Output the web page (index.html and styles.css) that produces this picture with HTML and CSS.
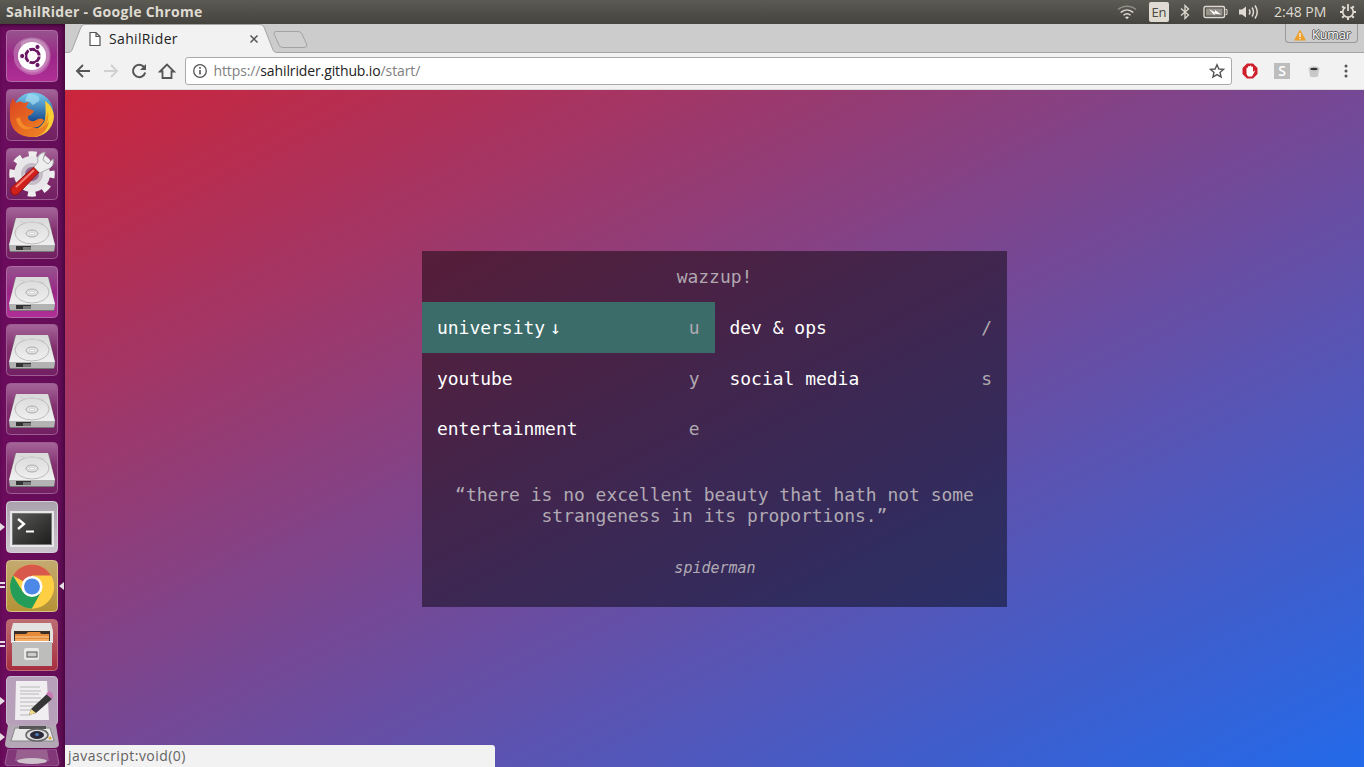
FILE: index.html
```html
<!DOCTYPE html>
<html lang="en">
<head>
<meta charset="utf-8">
<title>SahilRider</title>
<link rel="stylesheet" href="styles.css">
</head>
<body>
<svg class="defs" width="0" height="0">
  <defs>
    <linearGradient id="plum" x1="0" y1="0" x2="0" y2="1"><stop offset="0" stop-color="#a5669a"/><stop offset=".45" stop-color="#83306f"/><stop offset="1" stop-color="#721f63"/></linearGradient>
    <linearGradient id="magenta" x1="0" y1="0" x2="0" y2="1"><stop offset="0" stop-color="#96548d"/><stop offset=".5" stop-color="#9b2687"/><stop offset="1" stop-color="#b02f97"/></linearGradient>
    <linearGradient id="silver" x1="0" y1="0" x2="0" y2="1"><stop offset="0" stop-color="#aaa3ad"/><stop offset="1" stop-color="#cdc6cf"/></linearGradient>
    <linearGradient id="gold" x1="0" y1="0" x2="0" y2="1"><stop offset="0" stop-color="#c4aa70"/><stop offset="1" stop-color="#b59235"/></linearGradient>
    <linearGradient id="brick" x1="0" y1="0" x2="0" y2="1"><stop offset="0" stop-color="#bd6c72"/><stop offset="1" stop-color="#a72e3f"/></linearGradient>
    <linearGradient id="metal" x1="0" y1="0" x2="0" y2="1"><stop offset="0" stop-color="#d9d9d9"/><stop offset="1" stop-color="#f0f0f0"/></linearGradient>
    <linearGradient id="screen" x1="0" y1="0" x2="1" y2="1"><stop offset="0" stop-color="#5a5b58"/><stop offset="1" stop-color="#1c1d1c"/></linearGradient>
    <linearGradient id="fox" x1="0" y1="0" x2="1" y2="1"><stop offset="0" stop-color="#dc4420"/><stop offset="1" stop-color="#f08a24"/></linearGradient>
    <linearGradient id="globe" x1="0" y1="0" x2="0" y2="1"><stop offset="0" stop-color="#7accee"/><stop offset=".7" stop-color="#164b92"/></linearGradient>
    <g id="disk">
      <path d="M9 12H43L49 39L48 45H4L3 39Z" fill="#777"/>
      <path d="M10 11H42L49 38H3Z" fill="url(#metal)"/>
      <path d="M3 38H49L48 44H4Z" fill="#b3b3b3"/>
      <path d="M10 39H25V43H10Z" fill="#333"/><path d="M17 40H25V43H17Z" fill="#777"/>
      <ellipse cx="26" cy="26" rx="17" ry="11" fill="none" stroke="#bcbcbc"/>
      <ellipse cx="26" cy="26.500" rx="6" ry="3.500" fill="#e3e3e3" stroke="#aaa"/>
      <ellipse cx="26" cy="26.500" rx="2.500" ry="1.300" fill="#fff" stroke="#bbb" stroke-width=".6"/>
      <path d="M14 14C18 17 32 14 38 17" fill="none" stroke="#cfcfcf"/>
    </g>
  </defs>
</svg>

<header class="menubar">
  <span class="menubar-title">SahilRider - Google Chrome</span>
  <div class="indicators">
    <svg class="ind-wifi" width="20" height="16" viewBox="0 0 20 16" fill="none" stroke="#dfdbd2" stroke-width="1.500"><path d="M1 5.500C6 1 14 1 19 5.500" stroke="#918e86"/><path d="M3.700 8.500C7.500 5 12.500 5 16.300 8.500M6.500 11.300C8.600 9.400 11.400 9.400 13.500 11.300"/><path d="M8 13.200L10 15.300L12 13.200Q10 12 8 13.200Z" fill="#dfdbd2" stroke="none"/></svg>
    <span class="ind-lang">En</span>
    <svg class="ind-bt" width="10" height="16" viewBox="0 0 10 16" fill="none" stroke="#dfdbd2" stroke-width="1.300"><path d="M1 4.500L8.500 11L5 14.500V1.500L8.500 5L1 11.500"/></svg>
    <svg class="ind-bat" width="25" height="14" viewBox="0 0 25 14"><rect x="1" y="1.500" width="20.500" height="11" rx="1.500" fill="none" stroke="#dfdbd2" stroke-width="1.400"/><path d="M22.500 4.500H24V9.500H22.500" fill="none" stroke="#dfdbd2"/><rect x="3" y="3.500" width="16.500" height="7" fill="#96938b"/><path d="M6 4L12 7.500V5L18 9.500L11.500 8.500V10.500Z" fill="#fff"/></svg>
    <svg class="ind-vol" width="22" height="16" viewBox="0 0 22 16"><path d="M1 5.500H4L8 2.500V13.500L4 10.500H1Z" fill="#dfdbd2"/><path d="M11 5.500Q13 8 11 10.500M14 3.500Q17 8 14 12.500M17 1.500Q21.500 8 17 14.500" fill="none" stroke="#dfdbd2" stroke-width="1.500"/></svg>
    <span class="ind-clock">2:48 PM</span>
    <svg class="ind-gear" width="18" height="18" viewBox="0 0 18 18" fill="none" stroke="#dfdbd2"><path d="M6.500 4.200A5.300 5.300 0 1 0 11.500 4.200" stroke-width="1.800"/><path d="M9 1V8" stroke-width="1.800"/><path d="M9 14.500V17M1 9H3.500M14.500 9H17M3.200 3.200L5 5M14.800 3.200L13 5M3.200 14.800L5 13M14.800 14.800L13 13" stroke-width="2.100"/></svg>
  </div>
</header>

<div class="desktop">
  <nav class="launcher">
    <div class="app"><svg class="tile" viewBox="0 0 52 52"><rect x=".5" y=".5" width="51" height="51" rx="4" fill="url(#magenta)" stroke="#b06aa6"/><path d="M8 27C4 10 27 2 39 12C51 24 43 46 25 45C14 43 7 34 8 27Z" fill="#fff" opacity=".25"/><path d="M15 12C29 3 46 14 43 29C36 48 19 43 15 38" fill="#fff" opacity=".22"/><circle cx="26" cy="26" r="14" fill="#fff"/><circle cx="26.500" cy="26" r="6.700" fill="none" stroke="#6a1660" stroke-width="3"/><g stroke="#fff" stroke-width="1.100"><path d="M27 26L36 26M26 26L22 18M26 26L22 34"/></g><g fill="#6a1660" stroke="#fff" stroke-width="1"><circle cx="16.200" cy="26" r="2.600"/><circle cx="31.500" cy="17" r="2.600"/><circle cx="31.500" cy="35" r="2.600"/></g></svg></div>
    <div class="app"><svg class="tile" viewBox="0 0 52 52"><rect x=".5" y=".5" width="51" height="51" rx="4" fill="url(#plum)" stroke="#9c5b91"/><circle cx="27" cy="24" r="20.500" fill="url(#globe)"/><path d="M22 5C30 5 35 7 33 12L27 16L24 13L19 12Z" fill="#a5def3" opacity=".7"/><path d="M39 12C44 15 48 21 48 28C47 40 38 48 27 48C39 43 41 28 39 12Z" fill="#f9cf35"/><path d="M42 22C44 34 38 43 27 48L22 42C33 42 40 34 42 22Z" fill="#f39b25"/><path d="M7 9L10 14Q14 11 18 14L23 13L20 18C22 21 27 20 28 22Q26 26 22 27C21 31 26 34 30 31Q35 28 38 31C35 38 30 39 27 38C34 42 41 37 43 31C42 42 35 48 26 48C11 48 3 38 4 25Q3 16 7 9Z" fill="url(#fox)"/><path d="M14 28C15 36 20 39 27 38C22 43 12 40 10 30Z" fill="#f58b28"/></svg></div>
    <div class="app"><svg class="tile" viewBox="0 0 52 52"><rect x=".5" y=".5" width="51" height="51" rx="4" fill="url(#plum)" stroke="#9c5b91"/><circle cx="26" cy="26" r="18" fill="#e8e6e8"/><circle cx="26" cy="26" r="20" fill="none" stroke="#eee" stroke-width="5.500" stroke-dasharray="8 7.710" stroke-dashoffset="4"/><circle cx="26" cy="26" r="11" fill="#c6bdc7"/><circle cx="26" cy="26" r="7" fill="#94648e"/><path d="M6 39L29 18L34 23L12 46Q7 49 5 44Q4 41 6 39Z" fill="#cf201c" stroke="#951212"/><path d="M10 39L28 22" stroke="#f68074" stroke-width="2"/><path d="M28 19L32 14Q30 6 39 4L37 12L42 16L47 11Q49 19 40 22L34 25Z" fill="#eee" stroke="#aaa"/></svg></div>
    <div class="app"><svg class="tile" viewBox="0 0 52 52"><rect x=".5" y=".5" width="51" height="51" rx="4" fill="url(#plum)" stroke="#9c5b91"/><use href="#disk"/></svg></div>
    <div class="app"><svg class="tile" viewBox="0 0 52 52"><rect x=".5" y=".5" width="51" height="51" rx="4" fill="url(#magenta)" stroke="#b06aa6"/><use href="#disk"/></svg></div>
    <div class="app"><svg class="tile" viewBox="0 0 52 52"><rect x=".5" y=".5" width="51" height="51" rx="4" fill="url(#plum)" stroke="#9c5b91"/><use href="#disk"/></svg></div>
    <div class="app"><svg class="tile" viewBox="0 0 52 52"><rect x=".5" y=".5" width="51" height="51" rx="4" fill="url(#plum)" stroke="#9c5b91"/><use href="#disk"/></svg></div>
    <div class="app"><svg class="tile" viewBox="0 0 52 52"><rect x=".5" y=".5" width="51" height="51" rx="4" fill="url(#plum)" stroke="#9c5b91"/><use href="#disk"/></svg></div>
    <div class="app running"><svg class="tile" viewBox="0 0 52 52"><rect x=".5" y=".5" width="51" height="51" rx="4" fill="url(#silver)" stroke="#d4ced6"/><rect x="4" y="10" width="44" height="36" fill="#e8e8e8"/><rect x="6.500" y="12.500" width="39" height="31" fill="url(#screen)" stroke="#777"/><path d="M12 18L18 23L12 28" fill="none" stroke="#fff" stroke-width="2.300"/><path d="M20 30.500H28" stroke="#fff" stroke-width="2"/></svg></div>
    <div class="app running many focused"><svg class="tile" viewBox="0 0 52 52"><rect x=".5" y=".5" width="51" height="51" rx="4" fill="url(#gold)" stroke="#d6c18a"/><circle cx="26" cy="26.500" r="22" fill="#ffcf43"/><path d="M26 26.500L7 15.500A22 22 0 0 1 45 15.500H26Z" fill="#d8584c"/><path d="M7 15.500A22 22 0 0 0 26 48.500L35 32L26 26L16.500 31.500Z" fill="#249d59"/><path d="M26 16.500H45.500A22 22 0 0 1 26 48.500L35.500 32Z" fill="#ffcf43"/><circle cx="26" cy="26.500" r="10.500" fill="#fff"/><circle cx="26" cy="26.500" r="8" fill="#4b88e8"/></svg></div>
    <div class="app running many"><svg class="tile" viewBox="0 0 52 52"><rect x=".5" y=".5" width="51" height="51" rx="4" fill="url(#brick)" stroke="#bd6d77"/><path d="M7 4H45L47 12V24H5V12Z" fill="#e4e2e0"/><path d="M8 12H44V24H8Z" fill="#3b2d28"/><path d="M9 15H20L22 13H34L35 15H43V24H9Z" fill="#e58b39"/><path d="M9 18H43M9 21H43" stroke="#ffd09a"/><path d="M6 23H46V47H6Z" fill="#bdbdbb"/><path d="M6 22.500H46" stroke="#fff"/><rect x="18" y="29" width="15" height="12" rx="2" fill="#e9e9e7"/><rect x="21" y="33" width="10" height="5" fill="#ccc" stroke="#555"/></svg></div>
    <div class="app app-editor running"><svg width="52" height="50" viewBox="0 0 52 50"><path d="M4 .5H48Q51 .5 51.500 4V45Q51 49.500 47 49.500H5Q1 49.500 .5 46V4Q1 .5 4 .5Z" fill="#b7a0b9" stroke="#cab9cc"/><path d="M10 5H41L43 44H9Z" fill="#f0eef0"/><path d="M14 11H34M14 15H35M14 18H33M14 22H35M14 26H33M14 30H29M14 34H26M14 39H24" stroke="#b9b9b9"/><path d="M23 39L25 33L41 18L46 23L30 37Z" fill="#363636"/><path d="M40 18L43 15Q48 17 47 22L46 23Z" fill="#c878b4"/><path d="M23 39L25 33L30 37Z" fill="#edda8a"/></svg></div>
    <div class="app app-camera running"><svg width="56" height="24" viewBox="0 0 56 24"><path d="M4 0H52L55 19Q55 23 50 23H6Q1 23 1 19Z" fill="#b5a8b6"/><path d="M11 3H46L50 16H7Z" fill="#e8e8e8" stroke="#888"/><path d="M15 1H42V4H15Z" fill="#555"/><ellipse cx="33" cy="10" rx="11" ry="6" fill="#ddd" stroke="#666" stroke-width="1.500"/><ellipse cx="33" cy="10" rx="7" ry="4" fill="#282a3a"/><ellipse cx="33" cy="9.500" rx="2" ry="1.500" fill="#5178b5"/><circle cx="46" cy="13" r="1.500" fill="#dfa52c"/></svg></div>
    <div class="app app-folded"><svg width="56" height="17" viewBox="0 0 56 17"><path d="M4 0H52L55 14Q55 17 51 17H5Q1 17 1 14Z" fill="#813778" stroke="#9c6096"/><path d="M13 1H43L45 12H11Z" fill="#97608f"/><ellipse cx="28" cy="12" rx="15" ry="3" fill="#cdc1cc"/></svg></div>
  </nav>

  <main class="browser">
    <div class="tabstrip">
      <svg class="tab-shape" width="1299" height="29" viewBox="0 0 1299 29"><path d="M0 28.500H3Q6 28.500 7 26L16 3Q17 .5 20 .5H195Q198 .5 199 3L208 26Q209 28.500 212 28.500H1299V29H0Z" fill="#f2f2f2"/><path d="M0 28.500H3Q6 28.500 7 26L16 3Q17 .5 20 .5H195Q198 .5 199 3L208 26Q209 28.500 212 28.500H1299" fill="none" stroke="#a5a5a5"/><path d="M211 7.500H233Q236 7.500 237 10L242 21Q242 23.500 239 23.500H218Q215 23.500 214 21L209 10Q209 7.500 211 7.500Z" fill="#cfcfcf" stroke="#a3a3a3"/></svg>
      <div class="tab">
        <svg width="12" height="16" viewBox="0 0 12 16"><path d="M1 1.500H7L11 5.500V14.500H1ZM7 1.500V5.500H11" fill="#fff" stroke="#555" stroke-width="1.200"/></svg>
        <span class="tab-title">SahilRider</span>
        <svg class="tab-close" width="10" height="10" viewBox="0 0 10 10"><path d="M1.500 1.500L8.500 8.500M8.500 1.500L1.500 8.500" stroke="#555" stroke-width="1.500"/></svg>
      </div>
      <div class="profile">
        <svg width="12" height="12" viewBox="0 0 12 12"><path d="M6 .5L12 11.500H0Z" fill="#eda02b"/><path d="M6 4V8M6 9V10.200" stroke="#fff" stroke-width="1.200"/></svg>
        <span class="profile-name">Kumar</span>
      </div>
    </div>
    <div class="toolbar">
      <svg class="tool-back" width="16" height="14" viewBox="0 0 16 14"><path d="M15 7H2M8 1L2 7L8 13" fill="none" stroke="#555" stroke-width="1.900"/></svg>
      <svg class="tool-fwd" width="16" height="14" viewBox="0 0 16 14"><path d="M1 7H14M8 1L14 7L8 13" fill="none" stroke="#d0d0d0" stroke-width="1.900"/></svg>
      <svg class="tool-reload" width="16" height="16" viewBox="0 0 16 16"><path d="M13 4A6.200 6.200 0 1 0 14.200 9.500" fill="none" stroke="#555" stroke-width="2"/><path d="M15 1V7H9Z" fill="#555"/></svg>
      <svg class="tool-home" width="18" height="16" viewBox="0 0 18 16"><path d="M2 8.500L9 1.500L16 8.500H13.500V15H4.500V8.500Z" fill="none" stroke="#555" stroke-width="1.800"/></svg>
      <div class="omnibox">
        <svg width="16" height="16" viewBox="0 0 16 16"><circle cx="8" cy="8" r="6.300" fill="none" stroke="#555" stroke-width="1.300"/><path d="M8 7V11.500M8 4V5.700" stroke="#555" stroke-width="1.600"/></svg>
        <span class="url">https://<b>sahilrider.github.io</b>/start/</span>
        <svg class="star" width="16" height="16" viewBox="0 0 16 16"><path d="M8 1.700L9.900 6L14.500 6.400L11 9.500L12.100 14L8 11.600L3.900 14L5 9.500L1.500 6.400L6.100 6Z" fill="none" stroke="#555" stroke-width="1.400"/></svg>
      </div>
      <svg class="ext-hand" width="16" height="16" viewBox="0 0 16 16"><path d="M5 .5H11L15.500 5V11L11 15.500H5L.5 11V5Z" fill="#cf1f2b"/><path d="M4.500 9V5Q5.500 4 6 5V3.500Q7 2.500 7.600 3.500V3Q8.600 2 9.300 3V4Q10.300 3 11 4.300V9L12.300 7.500Q13.500 7.500 12.500 9L10 13.500H6L4.500 11Z" fill="#fff"/></svg>
      <span class="ext-s">S</span>
      <svg class="ext-cup" width="12" height="14" viewBox="0 0 12 14"><path d="M1 5H11L10 12.500Q6 14 2 12.500Z" fill="#c9c9c9"/><ellipse cx="6" cy="5" rx="5.200" ry="2.200" fill="#d9d9d9" stroke="#bbb" stroke-width=".6"/><ellipse cx="6" cy="5" rx="3.700" ry="1.200" fill="#333"/></svg>
      <svg class="ext-menu" width="4" height="14" viewBox="0 0 4 14" fill="#555"><circle cx="2" cy="2" r="1.500"/><circle cx="2" cy="7" r="1.500"/><circle cx="2" cy="12" r="1.500"/></svg>
    </div>
    <section class="page">
      <div class="panel">
        <h1 class="greeting">wazzup!</h1>
        <ul class="links">
          <li class="link active"><span>university<i class="arrow">↓</i></span><kbd>u</kbd></li>
          <li class="link"><span>dev &amp; ops</span><kbd>/</kbd></li>
          <li class="link"><span>youtube</span><kbd>y</kbd></li>
          <li class="link"><span>social media</span><kbd>s</kbd></li>
          <li class="link"><span>entertainment</span><kbd>e</kbd></li>
        </ul>
        <blockquote class="quote">“there is no excellent beauty that hath not some strangeness in its proportions.”</blockquote>
        <p class="author">spiderman</p>
      </div>
      <div class="status">javascript:void(0)</div>
    </section>
  </main>
</div>
</body>
</html>
```
FILE: styles.css
```css
* { box-sizing: border-box; }
body {
  margin: 0;
  width: 1365px;
  height: 767px;
  padding-right: 1px;
  overflow: hidden;
  background: #fff;
  font-family: "Open Sans", "Noto Sans", sans-serif;
  display: flex;
  flex-direction: column;
}
svg { display: block; flex: none; }
.defs { position: absolute; }

.menubar {
  height: 24px;
  flex: none;
  padding: 0 7px 0 6px;
  display: flex;
  align-items: center;
  justify-content: space-between;
  background: linear-gradient(#5b5a53, #44433e);
  color: #dfdbd2;
  font-size: 14px;
  line-height: 24px;
  white-space: nowrap;
}
.menubar-title { font-size: 14px; font-weight: 700; letter-spacing: 0.27px; }
.indicators { display: flex; align-items: center; }
.ind-lang {
  width: 20px;
  height: 20px;
  margin-left: 12px;
  border-radius: 2px;
  background: #dfdbd2;
  color: #4a4943;
  font-size: 13px;
  line-height: 20px;
  text-align: center;
}
.ind-bt { margin-left: 11px; }
.ind-bat { margin-left: 13px; }
.ind-vol { margin-left: 10px; }
.ind-clock { width: 54px; margin-left: 14px; }
.ind-gear { margin-left: 11px; }

.desktop { flex: 1; min-height: 0; display: flex; }
.launcher {
  width: 65px;
  flex: none;
  padding: 6px 0 0 6px;
  display: flex;
  flex-direction: column;
  gap: 6.9px;
  background: linear-gradient(90deg, #6b0b5c, #650d58 90%, #500845);
  box-shadow: inset 0 3px 4px -2px #30052a;
  overflow: hidden;
}
.app { position: relative; flex: none; height: 52px; }
.tile { width: 52px; height: 52px; }
.app-editor { height: 50px; margin-top: -1.500px; }
.app-camera { height: 24px; margin: -7.900px 0 0 -2px; }
.app-folded { height: 17px; margin: -7px 0 0 -2px; }
.running::before {
  content: "";
  position: absolute;
  left: -6px;
  top: calc(50% - 4px);
  border: 4px solid transparent;
  border-left: 5px solid #e5dce4;
  border-right: 0;
}
.app-camera::before { left: -4px; }
.many::before {
  width: 5px;
  height: 2px;
  border: solid #e5dce4;
  border-width: 2px 0;
}
.focused::after {
  content: "";
  position: absolute;
  right: 1px;
  top: calc(50% - 4px);
  border: 4px solid transparent;
  border-right: 5px solid #e5dce4;
  border-left: 0;
}

.browser { flex: 1; min-width: 0; display: flex; flex-direction: column; }
.tabstrip {
  height: 29px;
  flex: none;
  display: grid;
  grid-template-columns: 1fr auto;
  background: #ccc;
}
.tab-shape { grid-area: 1 / 1 / 2 / 3; }
.tab {
  grid-area: 1 / 1;
  width: 194px;
  height: 29px;
  padding-left: 24px;
  display: flex;
  align-items: center;
  color: #222;
  font-size: 14px;
  z-index: 1;
}
.tab-title { width: 72px; margin-left: 8px; letter-spacing: 0.35px; white-space: nowrap; }
.tab-close { margin-left: auto; }
.profile {
  grid-area: 1 / 2;
  width: 73px;
  height: 19px;
  margin-right: 6px;
  padding: 3px 0 0 8px;
  display: flex;
  align-items: center;
  gap: 6px;
  border: 1px solid #999;
  border-top: 0;
  border-radius: 0 0 4px 4px;
  z-index: 1;
}
.profile-name {
  color: #fff;
  font-size: 12.5px;
  line-height: 14px;
  text-shadow: 1px 0 #555, -1px 0 #555, 0 1px #555, 0 -1px #555;
}
.toolbar {
  height: 37px;
  flex: none;
  padding: 0 16px 0 10px;
  display: flex;
  align-items: center;
  background: #f2f2f2;
  border-bottom: 1px solid #ddd;
}
.tool-fwd { margin-left: 12px; }
.tool-reload { margin-left: 12px; }
.tool-home { margin-left: 11px; }
.omnibox {
  width: 1047px;
  height: 28px;
  margin-left: 9px;
  padding: 0 6px;
  display: flex;
  align-items: center;
  background: #fff;
  border: 1px solid #aaa;
  border-radius: 3px;
}
.url {
  margin-left: 5.500px;
  padding-bottom: 2px;
  color: #808080;
  font-size: 14px;
  letter-spacing: -0.12px;
}
.url b { color: #222; font-weight: 400; }
.star { margin-left: auto; }
.ext-hand { margin-left: 10px; }
.ext-s {
  width: 16px;
  height: 16px;
  margin-left: 16px;
  background: #bdbdbd;
  color: #fff;
  font-size: 14px;
  font-weight: 600;
  line-height: 16px;
  text-align: center;
}
.ext-cup { margin-left: 18px; }
.ext-menu { margin-left: auto; }

.page {
  position: relative;
  flex: 1;
  display: flex;
  align-items: center;
  justify-content: center;
  background: linear-gradient(to bottom right, #cb263c, #754895 50%, #236aea);
}
.panel {
  width: 585px;
  height: 356px;
  margin-top: 1px;
  background: rgba(0, 0, 0, 0.46);
  color: #fff;
  font: 17.97px/21px "DejaVu Sans Mono", monospace;
}
.greeting { margin: 0; padding: 15px; color: #b0a7af; font: inherit; text-align: center; }
.links {
  height: 152.700px;
  margin: 0;
  padding: 0;
  display: grid;
  grid-template-columns: 1fr 1fr;
  grid-auto-rows: 50.9px;
  list-style: none;
}
.link { padding: 14.700px 15px; display: flex; justify-content: space-between; }
.active { background: #3b6c6a; }
.link kbd { color: #b0a9b1; font: inherit; }
.arrow { margin-left: 5px; font-style: normal; font-size: 18px; }
.quote { margin: 0; padding: 29.700px 30px 0; color: #b1aab3; text-align: center; }
.author {
  margin: 31.500px 0 0;
  padding-left: 1px;
  color: #b1aab3;
  font-size: 15px;
  font-style: italic;
  line-height: 20px;
  text-align: center;
}
.status {
  position: absolute;
  left: 0;
  bottom: 0;
  width: 430px;
  height: 22px;
  padding-left: 3px;
  background: #f2f2f2;
  border-radius: 0 3px 0 0;
  color: #636363;
  font-size: 14px;
  letter-spacing: 0.45px;
  line-height: 22px;
}
```
